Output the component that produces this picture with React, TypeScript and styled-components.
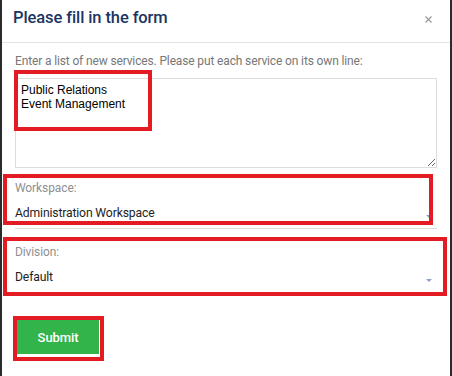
import React, { useState } from 'react';
import styled, { createGlobalStyle } from 'styled-components';

const GlobalStyle = createGlobalStyle`
  html, body {
    margin: 0;
    padding: 0;
    background: #fff;
  }
  * {
    box-sizing: border-box;
  }
`

const Modal = styled.div`
  width: 452px;
  height: 376px;
  background: #fff;
  border-left: 2px solid #2b2b2b;
  border-right: 2px solid #2b2b2b;
  font-family: Roboto, 'Liberation Sans', sans-serif;
  overflow: hidden;
`

const Header = styled.div`
  height: 43px;
  padding: 8px 18px 0 11px;
  border-bottom: 1px solid #e3e3e3;
  display: flex;
  align-items: flex-start;
  justify-content: space-between;
`

const Title = styled.h4`
  margin: 0;
  font-size: 16.5px;
  line-height: 20px;
  font-weight: 500;
  letter-spacing: -0.1px;
  color: #1b3462;
`

const Close = styled.button`
  border: none;
  background: none;
  padding: 0;
  margin-top: 8px;
  width: 7px;
  height: 7px;
  display: flex;
  cursor: pointer;
`

const Body = styled.form`
  padding: 11px 13px 0;
  display: flex;
  flex-direction: column;
`

const Hint = styled.p`
  margin: 0;
  font-size: 12px;
  line-height: 15px;
  letter-spacing: -0.14px;
  color: #777;
`

// wraps anything that carries a red review marker over it
const Marked = styled.div<{ $top?: number }>`
  position: relative;
  margin-top: ${p => p.$top ?? 0}px;
`

const Marker = styled.span<{ $l: number; $t: number; $w: number; $h: number }>`
  position: absolute;
  left: ${p => p.$l}px;
  top: ${p => p.$t}px;
  width: ${p => p.$w}px;
  height: ${p => p.$h}px;
  border: 4px solid #e31b23;
  pointer-events: none;
`

const Services = styled.textarea`
  display: block;
  width: 100%;
  height: 90px;
  padding: 4px 5px;
  border: 1px solid #dcdcdc;
  font-family: 'Liberation Sans', Arial, sans-serif;
  font-size: 12px;
  line-height: normal;
  color: #000;
  resize: vertical;
  outline: none;
`

const Label = styled.label`
  display: block;
  font-size: 12px;
  line-height: 15px;
  letter-spacing: -0.1px;
  color: #8f8f8f;
`

const SelectBox = styled.div`
  display: flex;
  align-items: center;
  justify-content: space-between;
  padding: 9px 5px 7px 0;
  border-bottom: 1px solid #dedede;
  font-size: 12.2px;
  line-height: 16px;
  letter-spacing: -0.15px;
  color: #1e1e1e;
  cursor: pointer;
`

const Caret = styled.svg`
  margin-top: 7px;
  flex: none;
`

const Submit = styled.button`
  width: 82px;
  height: 34px;
  border: none;
  background: #33b44a;
  color: #fff;
  font-family: Roboto, 'Liberation Sans', sans-serif;
  font-size: 13px;
  font-weight: 500;
  letter-spacing: -0.1px;
  padding: 0;
  cursor: pointer;
`

const SubmitRow = styled(Marked)`
  margin-left: 2px;
  align-self: flex-start;
`

const Select: React.FC<{ value: string }> = ({ value }) => (
  <SelectBox>
    <span>{value}</span>
    <Caret width="6" height="3" viewBox="0 0 6 3">
      <path d="M0 0h6L3 3z" fill="#8e9fca" />
    </Caret>
  </SelectBox>
)

const App: React.FC = () => {
  const [services, setServices] = useState('Public Relations\nEvent Management')

  return (
    <Modal>
      <GlobalStyle />
      <Header>
        <Title>Please fill in the form</Title>
        <Close type="button" aria-label="Close">
          <svg width="7" height="7" viewBox="0 0 7 7">
            <path d="M0.5 0.5l6 6M6.5 0.5l-6 6" stroke="#9a9a9a" strokeWidth="1.2" />
          </svg>
        </Close>
      </Header>
      <Body onSubmit={e => e.preventDefault()}>
        <Hint>Enter a list of new services. Please put each service on its own line:</Hint>
        <Marked $top={9}>
          <Services value={services} onChange={e => setServices(e.target.value)} />
          <Marker $l={-1} $t={-8} $w={138} $h={61} />
        </Marked>
        <Marked $top={13}>
          <Label>Workspace:</Label>
          <Select value="Administration Workspace" />
          <Marker $l={-12} $t={-7} $w={430} $h={51} />
        </Marked>
        <Marked $top={16}>
          <Label>Division:</Label>
          <Select value="Default" />
          <Marker $l={-12} $t={-8} $w={444} $h={59} />
        </Marked>
        <SubmitRow $top={27}>
          <Submit type="submit">Submit</Submit>
          <Marker $l={-4} $t={-4} $w={91} $h={45} />
        </SubmitRow>
      </Body>
    </Modal>
  )
}

export default App
